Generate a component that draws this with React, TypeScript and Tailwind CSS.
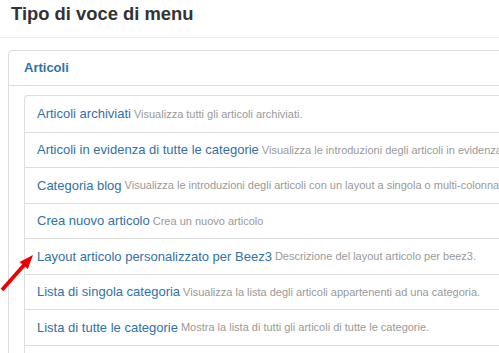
import React from "react";

const rows: [string, string][] = [
  ["Articoli archiviati", "Visualizza tutti gli articoli archiviati."],
  [
    "Articoli in evidenza di tutte le categorie",
    "Visualizza le introduzioni degli articoli in evidenza di tutte le categorie.",
  ],
  [
    "Categoria blog",
    "Visualizza le introduzioni degli articoli con un layout a singola o multi-colonna.",
  ],
  ["Crea nuovo articolo", "Crea un nuovo articolo"],
  [
    "Layout articolo personalizzato per Beez3",
    "Descrizione del layout articolo per beez3.",
  ],
  [
    "Lista di singola categoria",
    "Visualizza la lista degli articoli appartenenti ad una categoria.",
  ],
  [
    "Lista di tutte le categorie",
    "Mostra la lista di tutti gli articoli di tutte le categorie.",
  ],
  ["", ""],
];

export default function App() {
  return (
    <div
      className="relative w-[499px] h-[353px] overflow-hidden bg-white"
      style={{ fontFamily: '"Liberation Sans", Arial, sans-serif' }}
    >
      <div className="h-[38px] border-b border-[#eeeeee] pl-[11px] pt-[4px]">
        <h1 className="text-[18.4px] leading-[20px] font-bold text-[#333333]">
          Tipo di voce di menu
        </h1>
      </div>
      <div className="mt-[12px] ml-[8px] w-[600px] border border-[#dddddd] rounded-tl-[4px]">
        <div className="h-[35px] border-b border-[#dddddd] pl-[15px] flex items-center">
          <span className="text-[13px] font-bold text-[#3071a9]">Articoli</span>
        </div>
        <div className="pt-[9px] pl-[15px]">
          <div className="border border-[#dddddd] border-b-0 rounded-tl-[4px]">
            {rows.map(([t, d], i) => (
              <div
                key={i}
                className={
                  "h-[35.5px] flex items-center pl-[12px] whitespace-nowrap " +
                  (i > 0 ? "border-t border-[#dddddd]" : "")
                }
              >
                {t ? (
                  <>
                    <span className="text-[13px] text-[#3071a9]">{t}</span>
                    <span className="text-[11px] text-[#999999] ml-[3px]">{d}</span>
                  </>
                ) : null}
              </div>
            ))}
          </div>
        </div>
      </div>
      <svg
        className="absolute left-0 top-0 pointer-events-none"
        width="499"
        height="353"
        viewBox="0 0 499 353"
      >
        <line
          x1="2"
          y1="290"
          x2="25"
          y2="264"
          stroke="#ee0000"
          strokeWidth="3.8"
          strokeLinecap="butt"
        />
        <polygon points="33,255 19.6,261.9 27.8,269.1" fill="#ee0000" />
      </svg>
    </div>
  );
}
